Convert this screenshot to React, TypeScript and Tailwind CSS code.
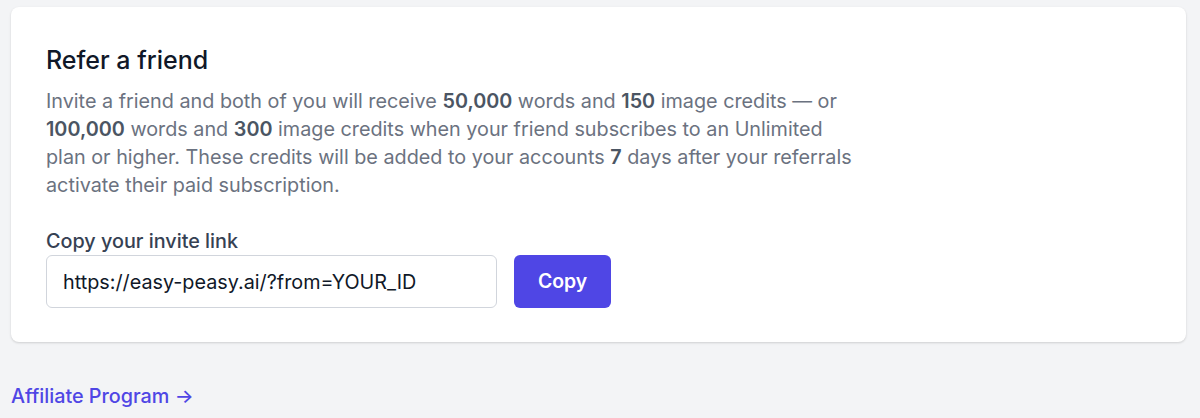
import React from "react";

export default function App() {
  return (
    <div
      className="min-h-[418px] w-[1200px] bg-[#f3f4f6] px-[11px] pt-[7px] text-gray-500"
      style={{ fontFamily: "Inter, 'Noto Sans', sans-serif" }}
    >
      <div className="rounded-lg bg-white px-[35px] pt-[37px] pb-[34px] shadow-[0_1px_3px_rgba(0,0,0,0.1),0_1px_2px_rgba(0,0,0,0.06)] mr-[3px]">
        <h2 className="text-[25px] font-medium leading-8 text-gray-900">Refer a friend</h2>
        <p className="mt-[11px] max-w-[815px] text-[19.8px] leading-7 text-[#6b7280]">
          Invite a friend and both of you will receive <b className="font-semibold text-[#4b5563]">50,000</b> words and{" "}
          <b className="font-semibold text-[#4b5563]">150</b> image credits — or{" "}
          <b className="font-semibold text-[#4b5563]">100,000</b> words and{" "}
          <b className="font-semibold text-[#4b5563]">300</b> image credits when your friend subscribes to an Unlimited
          plan or higher. These credits will be added to your accounts{" "}
          <b className="font-semibold text-[#4b5563]">7</b> days after your referrals activate their paid subscription.
        </p>
        <div className="mt-[28px]">
          <label className="block text-[19.8px] font-medium leading-7 text-gray-700">Copy your invite link</label>
          <div className="mt-0 flex items-center gap-[17px]">
            <input
              readOnly
              value="https://easy-peasy.ai/?from=YOUR_ID"
              className="h-[53px] w-[451px] rounded-md border border-gray-300 bg-white px-[16px] text-[19.8px] text-gray-900 outline-none"
            />
            <button className="h-[53px] w-[97px] rounded-md bg-[#4f46e5] text-[19.4px] font-semibold text-white">
              Copy
            </button>
          </div>
        </div>
      </div>
      <a href="#" className="mt-[40px] block text-[19.8px] font-medium leading-7 text-[#4f46e5]">
        Affiliate Program →
      </a>
    </div>
  );
}
